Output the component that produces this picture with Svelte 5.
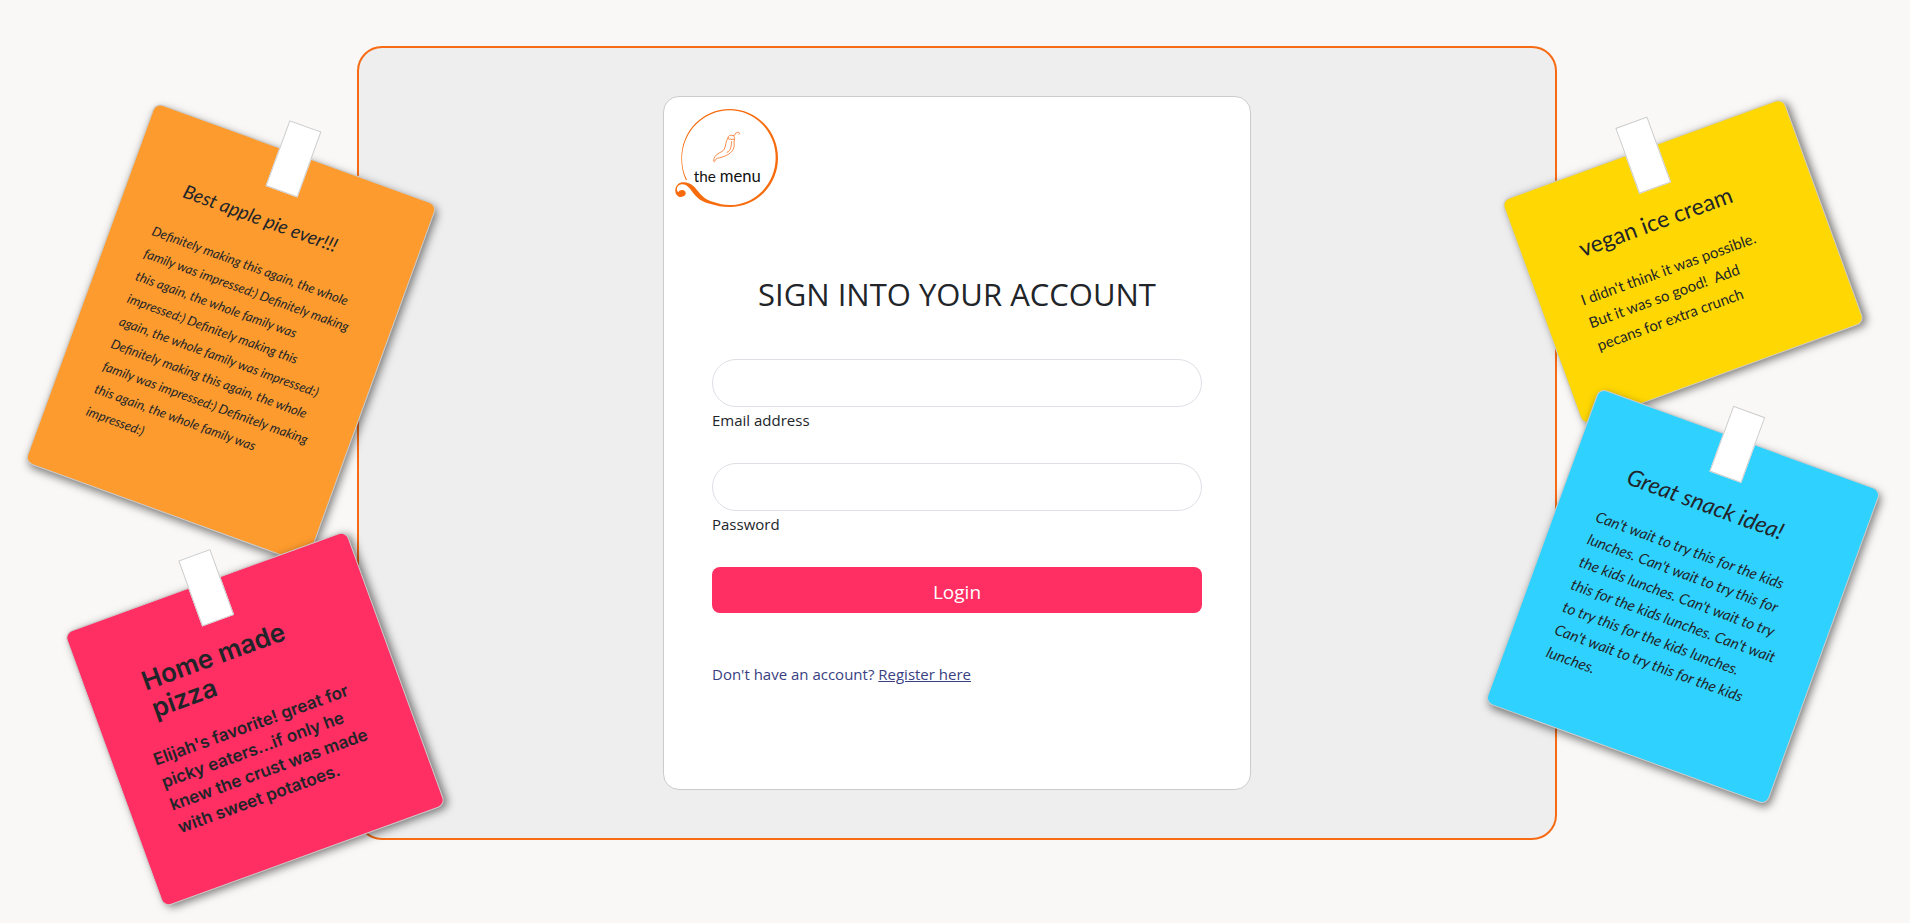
<script>
  const leftNotes = [
    {
      tone: 'orange',
      title: 'Best apple pie ever!!!',
      lines: [
        'Definitely making this again, the whole',
        'family was impressed:) Definitely making',
        'this again, the whole family was',
        'impressed:) Definitely making this',
        'again, the whole family was impressed:)',
        'Definitely making this again, the whole',
        'family was impressed:) Definitely making',
        'this again, the whole family was',
        'impressed:)'
      ]
    },
    {
      tone: 'pink',
      title: 'Home made pizza',
      lines: [
        "Elijah's favorite! great for",
        'picky eaters...if only he',
        'knew the crust was made',
        'with sweet potatoes.'
      ]
    }
  ];

  const rightNotes = [
    {
      tone: 'yellow',
      title: 'vegan ice cream',
      lines: [
        "I didn't think it was possible.",
        'But it was so good!  Add',
        'pecans for extra crunch'
      ]
    },
    {
      tone: 'blue',
      title: 'Great snack idea!',
      lines: [
        "Can't wait to try this for the kids",
        "lunches. Can't wait to try this for",
        "the kids lunches. Can't wait to try",
        "this for the kids lunches. Can't wait",
        'to try this for the kids lunches.',
        "Can't wait to try this for the kids",
        'lunches.'
      ]
    }
  ];

  let email = $state('');
  let password = $state('');
</script>

{#snippet note(item)}
  <article class="note {item.tone}">
    <span class="tape"></span>
    <h2>{item.title}</h2>
    <p>
      {#each item.lines as line}
        <span class="line">{line}</span>
      {/each}
    </p>
  </article>
{/snippet}

<div class="page">
  <aside class="notes left">
    {#each leftNotes as item}
      {@render note(item)}
    {/each}
  </aside>

  <main class="panel">
    <section class="card">
      <svg class="logo" viewBox="36 45 330 330" role="img" aria-label="the menu">
        <path
          fill="#f76b0c"
          d="M78 271 C69 253 64 229 64 204 A145 147 0 0 1 209 57 A145 147 0 0 1 209 351 C188 351 168 347 150 341 C126 337 109 323 98 307 C88 292 77 281 64 283 C50 286 47 299 55 307 C59 298 70 298 75 304 C81 312 74 321 63 321 C51 321 45 310 46 299 C48 284 59 276 72 277 C93 278 104 291 114 304 C126 319 138 331 158 335 C175 341 191 345 209 345 A138 142 0 0 0 209 61 A143 145 0 0 0 66 204 C66 229 71 251 81 269 Z"
        />
        <g fill="none" stroke="#f47a2c" stroke-width="2.6" stroke-linecap="round" stroke-linejoin="round">
          <path d="M204 144 C196 153 199 166 193 177 C186 190 161 189 161 214 C166 218 164 207 172 205 C190 201 211 194 219 179 C226 167 220 159 223 149" />
          <path d="M204 144 C205 135 212 135 218 137 C226 139 224 146 223 149 C218 143 213 153 211 147 C208 149 205 148 204 144" />
          <path d="M219 137 C228 139 222 128 233 127 C239 126 240 130 237 133" />
          <path d="M215 155 C213 169 214 182 201 187" />
        </g>
        <text x="101" y="276" class="brand">the <tspan class="brand-big">menu</tspan></text>
      </svg>

      <form onsubmit={(event) => event.preventDefault()}>
        <h1>SIGN INTO YOUR ACCOUNT</h1>
        <div class="field">
          <input id="email" type="email" bind:value={email} />
          <label for="email">Email address</label>
        </div>
        <div class="field">
          <input id="password" type="password" bind:value={password} />
          <label for="password">Password</label>
        </div>
        <button type="submit">Login</button>
        <p class="register">Don't have an account? <a href="#register">Register here</a></p>
      </form>
    </section>
  </main>

  <aside class="notes right">
    {#each rightNotes as item}
      {@render note(item)}
    {/each}
  </aside>
</div>

<style>
  :global(body) {
    margin: 0;
    background: #f9f8f6;
    color: #212529;
    font-family: 'Open Sans', 'Noto Sans', sans-serif;
  }

  .page,
  .page * {
    box-sizing: border-box;
  }

  .page {
    display: grid;
    grid-template-columns: minmax(0, 1fr) minmax(0, 1200px) minmax(0, 1fr);
    min-height: 100vh;
    padding: 46px 0 48px 4px;
    overflow: hidden;
  }

  .panel {
    display: flex;
    justify-content: center;
    align-self: start;
    padding: 48px;
    background: #eee;
    border: 2px solid #f76b14;
    border-radius: 25px;
  }

  .card {
    width: 588px;
    padding: 8px;
    background: #fff;
    border: 1px solid #ccc;
    border-radius: 16px;
  }

  .logo {
    display: block;
    width: 110px;
    height: 110px;
  }

  .brand {
    font: 46px Lato, sans-serif;
    fill: #111;
  }

  .brand-big {
    font-size: 50px;
  }

  form {
    padding: 59px 40px 94px;
  }

  h1 {
    margin: 0 0 45px;
    font-size: 31px;
    font-weight: 400;
    line-height: 40px;
    text-align: center;
  }

  .field {
    display: grid;
    margin-bottom: 24px;
  }

  input {
    width: 100%;
    height: 48px;
    padding: 8px 16px;
    color: inherit;
    font: inherit;
    background: #fff;
    border: 1px solid #dee0e5;
    border-radius: 24px;
  }

  label {
    margin-bottom: 6px;
    font-size: 15px;
    line-height: 26px;
  }

  button {
    display: block;
    width: 100%;
    height: 46px;
    padding: 4px 0 0;
    color: #fff;
    font: 19px 'Open Sans', 'Noto Sans', sans-serif;
    background: #ff2e63;
    border: 0;
    border-radius: 8px;
  }

  .register {
    margin: 48px 0 0;
    color: #393f81;
    font-size: 15px;
    line-height: 26px;
  }

  .register a {
    color: inherit;
  }

  .notes {
    position: relative;
    z-index: 1;
    display: flex;
    flex-direction: column;
    align-items: flex-start;
    gap: 48px;
    padding-top: 96px;
  }

  .left {
    padding-left: 77px;
  }

  .right {
    margin-left: -24px;
  }

  .note {
    position: relative;
    width: 300px;
    padding: 57px 32px 57px 40px;
    border: 1px solid #ccc;
    border-radius: 8px;
    box-shadow: 3px 3px 8px rgba(0, 0, 0, 0.5);
  }

  .note h2 {
    margin: 0 48px 22px 16px;
    font-size: 23px;
    font-weight: 400;
    line-height: 29px;
    white-space: nowrap;
  }

  .note p {
    margin: 0;
    font-size: 15px;
    line-height: 24px;
  }

  .line {
    display: block;
    white-space: pre;
  }

  .tape {
    position: absolute;
    top: -30px;
    left: 131px;
    width: 34px;
    height: 70px;
    background: #fff;
    border: 1px solid #ccc;
  }

  .orange,
  .blue {
    font-family: Lato, sans-serif;
    font-style: italic;
    transform: rotate(20deg);
  }

  .pink,
  .yellow {
    transform: rotate(-20deg);
  }

  .orange {
    background: #fd9b2e;
  }

  .note.orange h2 {
    font-size: 19px;
  }

  .note.orange p {
    font-size: 13px;
  }

  .pink {
    margin-left: 24px;
    font-family: Inter, sans-serif;
    background: #ff2e63;
  }

  .note.pink h2 {
    font-size: 26px;
    font-weight: 600;
    white-space: normal;
  }

  .note.pink p {
    font-size: 17px;
    font-weight: 600;
  }

  .yellow {
    font-family: Lato, sans-serif;
    background: #ffd803;
  }

  .blue {
    background: #2fd2ff;
  }
</style>
